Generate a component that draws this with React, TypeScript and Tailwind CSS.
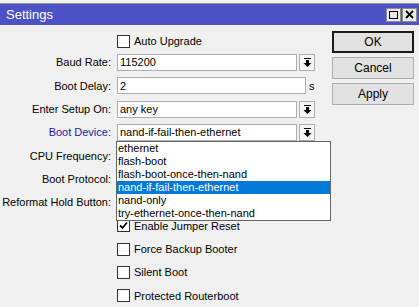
import type { ReactNode } from 'react';

const font = "font-['Liberation_Sans',Arial,sans-serif]";

function ArrowButton() {
  return (
    <div className="w-[16px] h-[17px] ml-[2px] border border-[#adadad] bg-[#f5f5f5] flex items-center justify-center">
      <svg width="9" height="9" viewBox="0 0 9 9">
        <rect x="1" y="0" width="7" height="1" fill="#000" />
        <path d="M3 2h3v3h2.5L4.5 9 0.5 5H3z" fill="#000" />
      </svg>
    </div>
  );
}

function Checkbox({ checked = false }: { checked?: boolean }) {
  return (
    <div className="w-[13px] h-[13px] border border-[#333] bg-white flex items-center justify-center shrink-0">
      {checked && (
        <svg width="9" height="9" viewBox="0 0 9 9">
          <path d="M1 4.5l2.5 2.5L8 1.5" stroke="#000" strokeWidth="1.8" fill="none" />
        </svg>
      )}
    </div>
  );
}

function FieldRow({ label, blue, children }: { label: string; blue?: boolean; children?: ReactNode }) {
  return (
    <div className="flex items-center h-[17px]">
      <div className={`w-[112px] text-right pr-[1px] whitespace-nowrap ${blue ? 'text-[#1c1ca8]' : 'text-black'}`}>
        {label}
      </div>
      <div className="ml-[5px] flex items-center">{children}</div>
    </div>
  );
}

function CheckRow({ label, checked }: { label: string; checked?: boolean }) {
  return (
    <div className="flex items-center h-[17px] pl-[117px] gap-[4px]">
      <Checkbox checked={checked} />
      <span>{label}</span>
    </div>
  );
}

function Input({ value, width }: { value: string; width: string }) {
  return (
    <div className={`${width} h-[17px] border border-[#abadb3] bg-white px-[2px] flex items-center whitespace-nowrap`}>
      {value}
    </div>
  );
}

const options = [
  'ethernet',
  'flash-boot',
  'flash-boot-once-then-nand',
  'nand-if-fail-then-ethernet',
  'nand-only',
  'try-ethernet-once-then-nand',
];

function DialogButton({ label, primary }: { label: string; primary?: boolean }) {
  return (
    <div
      className={`h-[22px] w-[82px] flex items-center justify-center bg-[#e1e1e1] text-[12px] ${
        primary ? 'border-2 border-[#1a1a1a]' : 'border border-[#adadad]'
      }`}
    >
      {label}
    </div>
  );
}

export default function App() {
  return (
    <div className={`w-[419px] h-[307px] overflow-hidden bg-[#f0f0f0] text-[11px] text-black ${font}`}>
      {/* window behind */}
      <div className="h-[4px] bg-[#f4f4f4] border-b border-[#9a9a9a]" />

      {/* title bar */}
      <div className="h-[21px] bg-[#4c51c6] flex items-center justify-between pl-[6px] pr-[2px]">
        <span className="text-white text-[13px]">Settings</span>
        <div className="flex gap-[1px]">
          <div className="w-[15px] h-[14px] bg-[#eaeaea] border border-[#8c8c8c] flex items-center justify-center">
            <div className="w-[9px] h-[8px] border-[1.5px] border-black" />
          </div>
          <div className="w-[15px] h-[14px] bg-[#eaeaea] border border-[#8c8c8c] flex items-center justify-center">
            <svg width="9" height="9" viewBox="0 0 9 9">
              <path d="M1 1l7 7M8 1L1 8" stroke="#000" strokeWidth="1.8" />
            </svg>
          </div>
        </div>
      </div>

      <div className="flex">
        {/* form */}
        <div className="w-[332px] relative pt-[10px]">
          <div className="flex items-center h-[13px] pl-[117px] gap-[4px]">
            <Checkbox />
            <span>Auto Upgrade</span>
          </div>

          <div className="flex flex-col gap-[6.33px] mt-[6px]">
            <FieldRow label="Baud Rate:">
              <Input value="115200" width="w-[180px]" />
              <ArrowButton />
            </FieldRow>
            <FieldRow label="Boot Delay:">
              <Input value="2" width="w-[189px]" />
              <span className="ml-[3px]">s</span>
            </FieldRow>
            <FieldRow label="Enter Setup On:">
              <Input value="any key" width="w-[180px]" />
              <ArrowButton />
            </FieldRow>
            <FieldRow label="Boot Device:" blue>
              <Input value="nand-if-fail-then-ethernet" width="w-[180px]" />
              <ArrowButton />
            </FieldRow>
            <FieldRow label="CPU Frequency:" />
            <FieldRow label="Boot Protocol:" />
            <FieldRow label="Reformat Hold Button:" />
            <CheckRow label="Enable Jumper Reset" checked />
            <CheckRow label="Force Backup Booter" />
            <CheckRow label="Silent Boot" />
            <CheckRow label="Protected Routerboot" />
          </div>

          {/* open dropdown list */}
          <div className="absolute left-[116px] top-[116px] w-[215px] border border-[#646464] bg-white">
            {options.map((o) => (
              <div
                key={o}
                className={`h-[13px] leading-[13px] pl-[1px] whitespace-nowrap ${
                  o === 'nand-if-fail-then-ethernet' ? 'bg-[#0078d7] text-white' : ''
                }`}
              >
                {o}
              </div>
            ))}
          </div>
        </div>

        {/* buttons */}
        <div className="pt-[6px] flex flex-col gap-[4px]">
          <DialogButton label="OK" primary />
          <DialogButton label="Cancel" />
          <DialogButton label="Apply" />
        </div>
      </div>
    </div>
  );
}
